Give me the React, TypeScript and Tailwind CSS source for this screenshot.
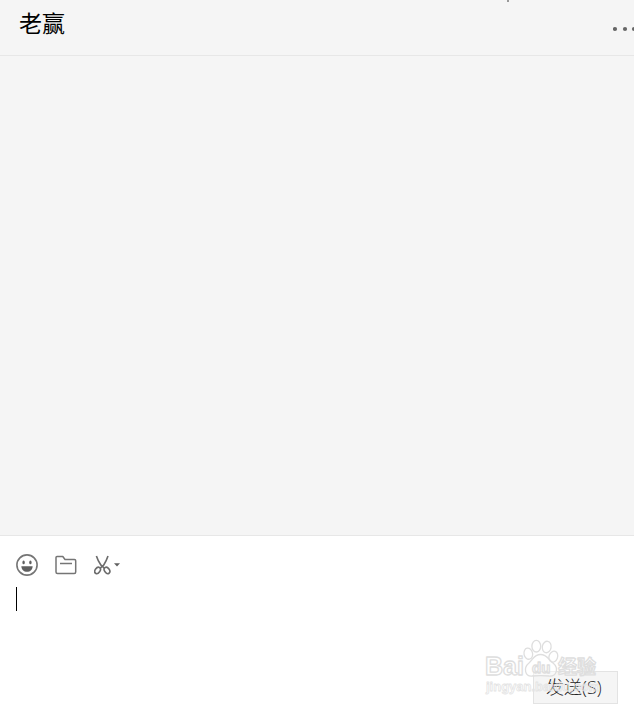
import React from "react";

function SmileIcon() {
  return (
    <svg width="22" height="22" viewBox="0 0 22 22" fill="none" aria-hidden="true">
      <circle cx="11" cy="11" r="10.1" stroke="#757575" strokeWidth="1.6" />
      <ellipse cx="7.6" cy="8.4" rx="1.2" ry="1.9" fill="#606060" />
      <ellipse cx="14.4" cy="8.4" rx="1.2" ry="1.9" fill="#606060" />
      <path d="M5.4 12.2h11.2c0 3.2-2.4 5.6-5.6 5.6S5.4 15.4 5.4 12.2Z" fill="#606060" />
    </svg>
  );
}

function FolderIcon() {
  return (
    <svg width="22" height="20" viewBox="0 0 22 20" fill="none" stroke="#757575" strokeWidth="1.5" aria-hidden="true">
      <path d="M1 17V2.5q0-1 1-1h5.8L10 4.5h9.5q1.2 0 1.2 1.2V17q0 1.5-1.5 1.5H2.5Q1 18.5 1 17Z" strokeLinejoin="round" />
      <path d="M5 8.5h12" />
    </svg>
  );
}

function ScissorsIcon() {
  return (
    <svg width="27" height="20" viewBox="0 0 27 20" fill="none" stroke="#6c6c6c" strokeWidth="1.6" aria-hidden="true">
      <path d="M2.4 1Q4 6 7 10.2L10.6 13.4M14 1Q12.4 6 9.6 10.2L6 13.4" />
      <ellipse cx="3.6" cy="15.4" rx="2.4" ry="3.5" transform="rotate(35 3.6 15.4)" />
      <ellipse cx="13" cy="15.4" rx="2.4" ry="3.5" transform="rotate(-35 13 15.4)" />
      <path d="M20 8.2h6l-3 3.2Z" fill="#606060" stroke="none" />
    </svg>
  );
}

function Watermark() {
  return (
    <svg
      className="pointer-events-none absolute right-8 bottom-2 font-['Liberation_Sans','Noto_Sans_CJK_SC',sans-serif]"
      width="118"
      height="62"
      viewBox="0 0 118 62"
      fill="#ffffff"
      fillOpacity="0.4"
      stroke="#dedede"
      strokeWidth="1.3"
      strokeLinejoin="round"
      aria-hidden="true"
    >
      <ellipse cx="44.3" cy="15.7" rx="4.3" ry="5.6" transform="rotate(-12 44.3 15.7)" />
      <ellipse cx="52.3" cy="8.2" rx="4.4" ry="5.8" />
      <ellipse cx="62.7" cy="9" rx="4.4" ry="5.8" transform="rotate(10 62.7 9)" />
      <ellipse cx="69.3" cy="18.7" rx="4.3" ry="5.6" transform="rotate(20 69.3 18.7)" />
      <path d="M56.5 16.5C50 16.5 49.500 21 45 25C39 30 41 38.500 48 38C53 37.500 60 37.500 65 38C73 38.500 75 30 69 25C64 21 63 16.500 56.500 16.500Z" />
      <g fontWeight="700">
        <text x="1" y="37" fontSize="25">Bai</text>
        <text x="48" y="35" fontSize="15">du</text>
        <text x="74" y="36" fontSize="19">经验</text>
        <text x="2" y="53" fontSize="13" fill="none" stroke="#e4e4e4" strokeWidth="0.8">jingyan.baidu.com</text>
      </g>
    </svg>
  );
}

export default function App() {
  return (
    <div className="relative flex min-h-screen flex-col overflow-hidden bg-[#f5f5f5] font-['Noto_Sans_CJK_SC',sans-serif]">
      <span className="absolute top-0 right-[125px] h-0.5 w-0.5 bg-[#999999]" />
      <header className="flex h-14 items-start justify-between border-b border-[#e7e7e7] pl-[19px]">
        <h1 className="pt-1.5 text-[23px] leading-8 text-black">老赢</h1>
        <button type="button" aria-label="更多" className="flex h-14 items-center pt-0.5">
          <svg width="21" height="6" viewBox="0 0 21 6" fill="#666666" aria-hidden="true">
            <circle cx="2" cy="3" r="2.1" />
            <circle cx="12" cy="3" r="2.1" />
            <circle cx="21" cy="3" r="2.1" />
          </svg>
        </button>
      </header>

      <main className="flex-1" />

      <section className="relative flex flex-col border-t border-[#e7e7e7] bg-white">
        <div className="flex h-[51px] items-center gap-[17px] px-4 pt-[7px]">
          <button type="button" aria-label="表情"><SmileIcon /></button>
          <button type="button" aria-label="发送文件"><FolderIcon /></button>
          <button type="button" aria-label="截图"><ScissorsIcon /></button>
        </div>
        <div className="relative h-[84px]">
          <textarea aria-label="输入消息" className="block h-full w-full resize-none bg-transparent px-4 text-lg leading-6 caret-transparent outline-none" />
          <span className="absolute top-0 left-4 h-6 w-px bg-black" />
        </div>
        <div className="flex justify-end pr-4 pb-1">
          <button type="button" className="h-[33px] min-w-[85px] border border-[#e3e3e3] bg-[#f5f5f5] px-3 text-left font-['Open_Sans','Noto_Sans_CJK_SC',sans-serif] text-lg leading-[31px] font-light text-[#222222]">
            发送(S)
          </button>
        </div>
        <Watermark />
      </section>
    </div>
  );
}
